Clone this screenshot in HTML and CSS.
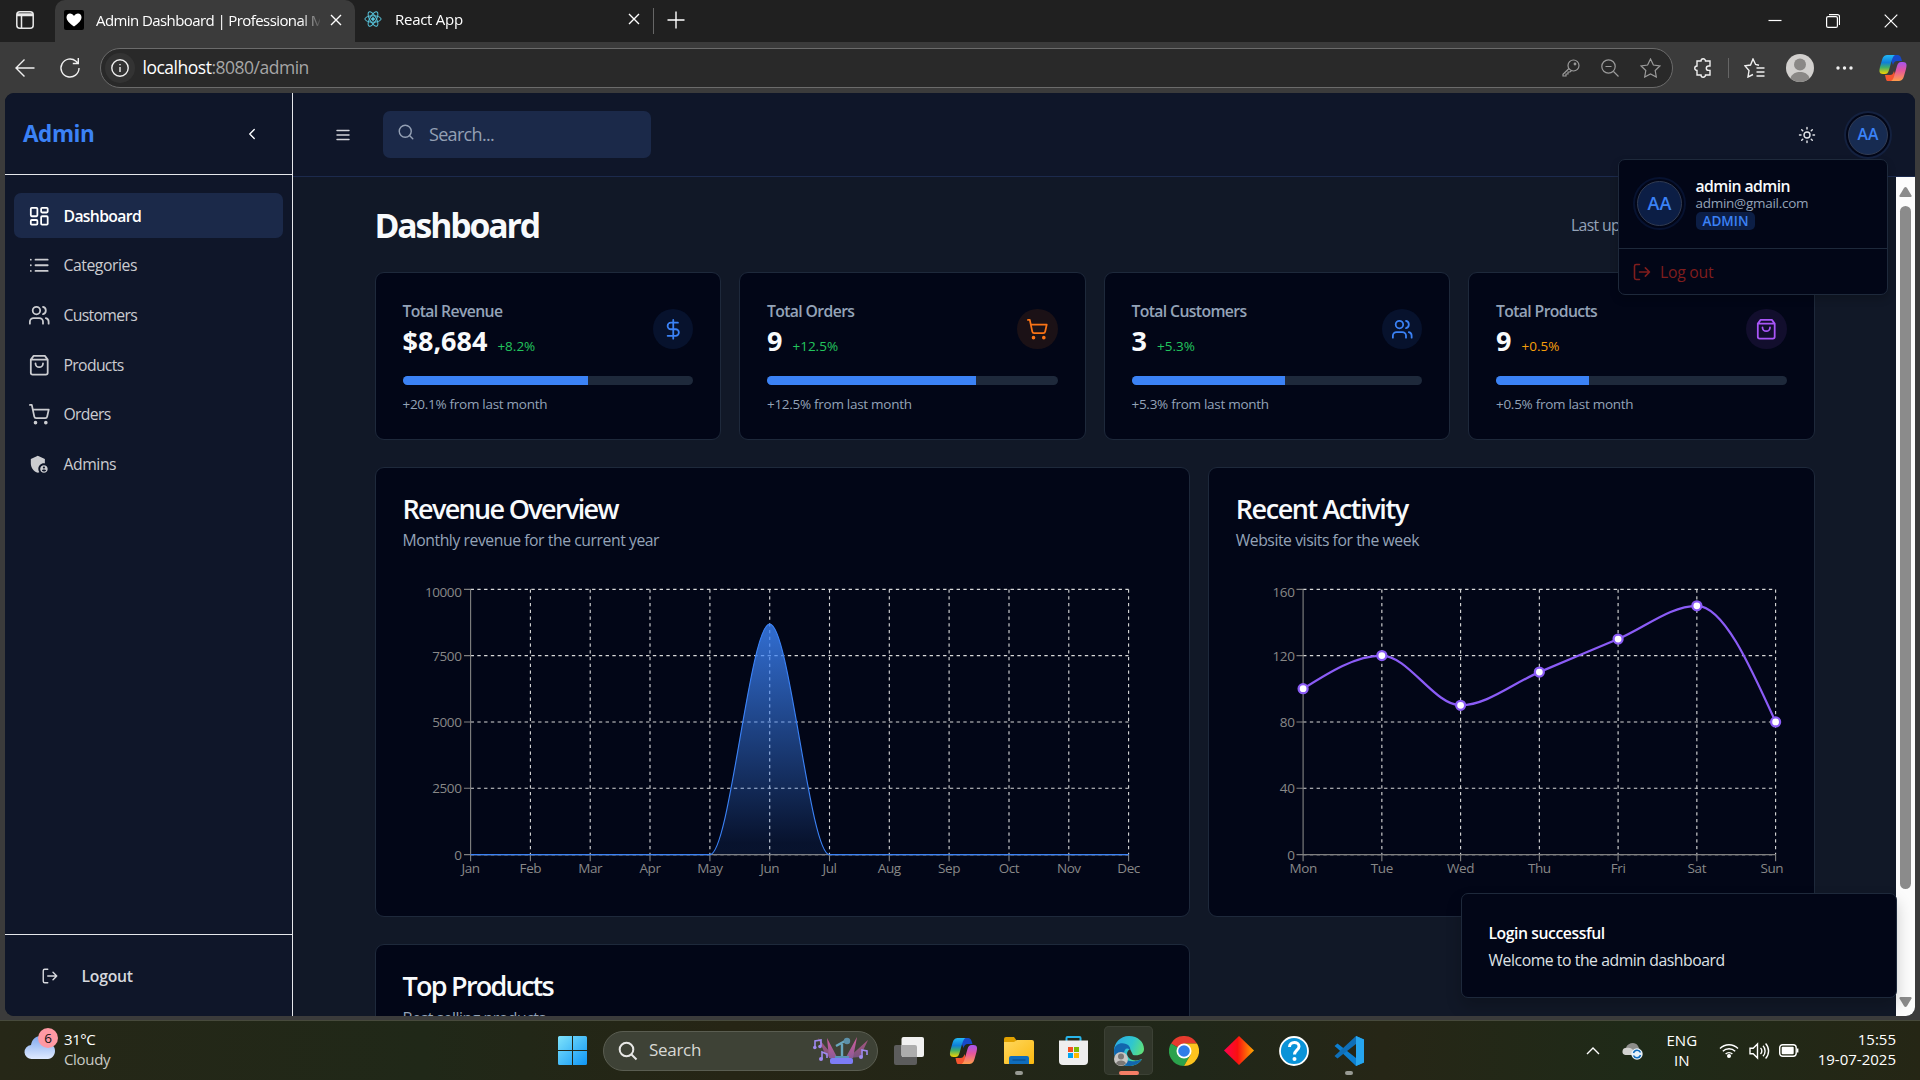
FILE: index.html
```html
<!DOCTYPE html>
<html lang="en">
<head>
<meta charset="utf-8">
<title>Admin Dashboard</title>
<link rel="stylesheet" href="styles.css">
</head>
<body>
<svg class="defs" width="0" height="0" aria-hidden="true">
  <defs>
    <linearGradient id="revenue" x1="0" y1="0" x2="0" y2="1"><stop offset=".05" stop-color="#3b82f6" stop-opacity=".8"/><stop offset=".95" stop-color="#3b82f6" stop-opacity=".1"/></linearGradient>
    <linearGradient id="cpBlue" x1="0" y1="0" x2="0" y2="1"><stop offset="0" stop-color="#22b8f5"/><stop offset=".4" stop-color="#0f7fd8"/><stop offset=".65" stop-color="#3fae6a"/><stop offset="1" stop-color="#f5d400"/></linearGradient>
    <linearGradient id="cpPink" x1="0" y1="0" x2="0" y2="1"><stop offset="0" stop-color="#a555f0"/><stop offset=".45" stop-color="#e4569c"/><stop offset="1" stop-color="#ff9d4a"/></linearGradient>
    <linearGradient id="winTile" x1="0" y1="0" x2="1" y2="1"><stop offset="0" stop-color="#7fe3fb"/><stop offset="1" stop-color="#0f96f5"/></linearGradient>
    <linearGradient id="cloud" x1="0" y1="0" x2="0" y2="1"><stop offset="0" stop-color="#7fa8ee"/><stop offset="1" stop-color="#dfeaff"/></linearGradient>
    <linearGradient id="folder" x1="0" y1="0" x2="1" y2="1"><stop offset="0" stop-color="#ffd75e"/><stop offset="1" stop-color="#fbb90f"/></linearGradient>
    <linearGradient id="edge" x1="0" y1="0" x2="1" y2=".4"><stop offset="0" stop-color="#2aa7e8"/><stop offset=".6" stop-color="#2fc6cf"/><stop offset="1" stop-color="#5fe07a"/></linearGradient>
    <linearGradient id="gem" x1="0" y1="0" x2="1" y2="0"><stop offset="0" stop-color="#ff0050"/><stop offset=".45" stop-color="#fa1010"/><stop offset="1" stop-color="#ffa800"/></linearGradient>
    <linearGradient id="beam" x1="0" y1="0" x2="0" y2="1"><stop offset="0" stop-color="#d35c9c"/><stop offset="1" stop-color="#8a5a94"/></linearGradient>
    <symbol id="i-dashboard" viewBox="0 0 24 24"><rect x="3" y="3" width="7" height="9" rx="1"/><rect x="14" y="3" width="7" height="5" rx="1"/><rect x="14" y="12" width="7" height="9" rx="1"/><rect x="3" y="16" width="7" height="5" rx="1"/></symbol>
    <symbol id="i-list" viewBox="0 0 24 24"><path d="M8 6h13M8 12h13M8 18h13M3 6h.01M3 12h.01M3 18h.01"/></symbol>
    <symbol id="i-users" viewBox="0 0 24 24"><path d="M16 21v-2a4 4 0 0 0-4-4H6a4 4 0 0 0-4 4v2"/><circle cx="9" cy="7" r="4"/><path d="M22 21v-2a4 4 0 0 0-3-3.87M16 3.13a4 4 0 0 1 0 7.75"/></symbol>
    <symbol id="i-bag" viewBox="0 0 24 24"><path d="M6 2 3 6v14a2 2 0 0 0 2 2h14a2 2 0 0 0 2-2V6l-3-4ZM3 6h18M16 10a4 4 0 0 1-8 0"/></symbol>
    <symbol id="i-cart" viewBox="0 0 24 24"><circle cx="8" cy="21" r="1"/><circle cx="19" cy="21" r="1"/><path d="M2.05 2.05h2l2.66 12.42a2 2 0 0 0 2 1.58h9.78a2 2 0 0 0 1.95-1.57l1.65-7.43H5.12"/></symbol>
    <symbol id="i-shield" viewBox="0 0 24 24"><path d="M17 11c.34 0 .67.04 1 .09V6.27L10.500 3 3 6.270v4.910c0 4.540 3.200 8.790 7.500 9.820.55-.13 1.080-.32 1.600-.55C11.410 19.470 11 18.280 11 17c0-3.310 2.690-6 6-6z"/><path fill-rule="evenodd" d="M17 13c-2.210 0-4 1.790-4 4s1.790 4 4 4 4-1.790 4-4-1.790-4-4-4zm0 1.380c.62 0 1.120.51 1.120 1.120s-.51 1.120-1.120 1.120-1.120-.51-1.120-1.120.5-1.120 1.120-1.120zm0 5.370c-.93 0-1.740-.46-2.240-1.170.05-.72 1.510-1.080 2.240-1.080s2.190.36 2.240 1.080c-.5.71-1.310 1.170-2.240 1.170z"/></symbol>
    <symbol id="i-logout" viewBox="0 0 24 24"><path d="M9 21H5a2 2 0 0 1-2-2V5a2 2 0 0 1 2-2h4M16 17l5-5-5-5M21 12H9"/></symbol>
    <symbol id="i-dollar" viewBox="0 0 24 24"><path d="M12 2v20M17 5H9.500a3.500 3.500 0 0 0 0 7h5a3.500 3.500 0 0 1 0 7H6"/></symbol>
    <symbol id="i-search" viewBox="0 0 24 24"><circle cx="11" cy="11" r="8"/><path d="m21 21-4.300-4.300"/></symbol>
    <symbol id="i-copilot" viewBox="0 0 28 26"><path d="M10 0h9c2 0 3 2 4 6h-5c-2 0-3 1-4 4z" fill="#1749c9"/><path d="M18 26H9c-2 0-2-2-3-6h5c2 0 3-1 4-4z" fill="#f4552f"/><path d="M9 0h7c-2 1-3 4-4 8l-2 7c-1 3-2 4-4 4H4c-4 0-4-3-3-7l2-7c1-4 3-5 6-5z" fill="url(#cpBlue)"/><path d="M19 26h-7c2-1 3-4 4-8l2-7c1-3 2-4 4-4h2c4 0 4 3 3 7l-2 7c-1 4-3 5-6 5z" fill="url(#cpPink)"/></symbol>
    <symbol id="i-x" viewBox="0 0 12 12"><path d="M1 1l10 10M11 1 1 11"/></symbol>
  </defs>
</svg>

<div class="tabs">
  <div class="workspace"><svg width="18" height="18" viewBox="0 0 18 18"><rect x=".8" y=".8" width="16.400" height="16.400" rx="3"/><path d="M1 3h16M1 4.500h16M5.500 5v12"/></svg></div>
  <div class="tab tab-active">
    <svg class="favicon" width="20" height="20" viewBox="0 0 20 20"><rect width="20" height="20" rx="2" fill="#000"/><path d="M10 16.500C5 12.800 2.500 10.200 2.500 7.200 2.500 5 4 3.500 6 3.500c1.600 0 3.200 1 4 2.500.8-1.500 2.400-2.500 4-2.500 2 0 3.500 1.500 3.500 3.700 0 3-2.500 5.600-7.500 9.300z" fill="#fff"/></svg>
    <span class="tab-title">Admin Dashboard | Professional M</span>
    <svg class="tab-x" width="12" height="12"><use href="#i-x"/></svg>
  </div>
  <div class="tab tab-idle">
    <svg class="react-icon" width="18" height="18" viewBox="-10 -10 20 20"><ellipse rx="9" ry="3.600"/><ellipse rx="9" ry="3.600" transform="rotate(60)"/><ellipse rx="9" ry="3.600" transform="rotate(120)"/><circle r="1.500" fill="#58c4dc"/></svg>
    <span class="tab-title react">React App</span>
    <svg class="tab-x" width="12" height="12"><use href="#i-x"/></svg>
  </div>
  <svg class="tab-plus" width="18" height="18" viewBox="0 0 18 18"><path d="M9 .5v17M.5 9h17"/></svg>
  <div class="window-buttons">
    <svg width="14" height="14" viewBox="0 0 14 14"><path d="M.5 6.500h13"/></svg>
    <svg width="14" height="14" viewBox="0 0 14 14"><rect x=".6" y="2.600" width="10.800" height="10.800" rx="1.500"/><path d="M3 .6h8.500a2 2 0 0 1 2 2V11"/></svg>
    <svg width="14" height="14" viewBox="0 0 14 14"><path d="M.7.7l12.600 12.600M13.300.7.7 13.300"/></svg>
  </div>
</div>

<div class="toolbar">
  <svg class="back" width="20" height="20" viewBox="0 0 20 20"><path d="M19.500 10H1M9.500 1.500 1 10l8.500 8.500"/></svg>
  <svg class="reload" width="22" height="22" viewBox="0 0 22 22"><path d="M20 11a9 9 0 1 1-3-6.700L19 6.300M19.300 1v5.500h-5.500"/></svg>
  <div class="address">
    <span class="site-info"><svg width="18" height="18" viewBox="0 0 18 18"><circle cx="9" cy="9" r="8.200"/><path d="M9 8v5M9 5v1.200"/></svg></span>
    <span class="url">localhost<span class="url-rest">:8080/admin</span></span>
    <div class="address-icons">
      <svg width="18" height="18" viewBox="0 0 18 18"><circle cx="11.500" cy="6.500" r="5.500"/><circle cx="13" cy="5" r=".8"/><path d="M7 9.500 1 15.300V17h3v-2h2v-2h2l1.500-1.500"/></svg>
      <svg width="18" height="18" viewBox="0 0 18 18"><circle cx="7.500" cy="7.500" r="6.700"/><path d="M12.500 12.500l5 5M4.500 7.500h6"/></svg>
      <svg width="21" height="20" viewBox="0 0 21 20"><path d="M10.500 1l2.900 6 6.500.9-4.700 4.600 1.100 6.500-5.800-3.100L4.700 19l1.100-6.500L1.100 7.900l6.500-.9z"/></svg>
    </div>
  </div>
  <div class="toolbar-icons">
    <svg class="ext" width="20" height="20" viewBox="0 0 20 20"><path d="M4 3h4a2 2 0 0 1 4.500 0H17v5h-1.500a2.200 2.200 0 0 0 0 4.400H17V17h-4.500a2 2 0 0 1-4.500 0H4v-4.500a2.200 2.200 0 0 1 0-4.500z"/></svg>
    <span class="divider"></span>
    <svg class="favs" width="21" height="20" viewBox="0 0 21 20"><path d="M9 16.500l-5 2.500 1-6.500L1 7.900l5.500-.9L9 1l2.600 5.500L15 7.300M12.500 10H20.500M12.500 14h8M12.500 18h8"/></svg>
    <svg class="profile" width="28" height="28" viewBox="0 0 28 28"><circle cx="14" cy="14" r="14" fill="#d2d0ce"/><circle cx="14" cy="10.500" r="6" fill="#8a8886"/><path d="M4.500 24.200C6 19.500 10 18 14 18s8 1.500 9.500 6.200A14 14 0 0 1 4.500 24.200z" fill="#8a8886"/></svg>
    <svg class="dots" width="17" height="4" viewBox="0 0 17 4"><circle cx="2" cy="2" r="1.700"/><circle cx="8.500" cy="2" r="1.700"/><circle cx="15" cy="2" r="1.700"/></svg>
    <svg class="copilot" width="28" height="26"><use href="#i-copilot"/></svg>
  </div>
</div>

<div class="page">
  <aside class="sidebar">
    <div class="brand"><span class="brand-name">Admin</span><svg class="ln" width="18" height="18" viewBox="0 0 24 24"><path d="M15 18l-6-6 6-6"/></svg></div>
    <nav class="nav">
      <a class="nav-item nav-active"><svg class="ln"><use href="#i-dashboard"/></svg>Dashboard</a>
      <a class="nav-item"><svg class="ln"><use href="#i-list"/></svg>Categories</a>
      <a class="nav-item tight"><svg class="ln"><use href="#i-users"/></svg>Customers</a>
      <a class="nav-item tight"><svg class="ln"><use href="#i-bag"/></svg>Products</a>
      <a class="nav-item tight"><svg class="ln"><use href="#i-cart"/></svg>Orders</a>
      <a class="nav-item"><svg class="solid"><use href="#i-shield"/></svg>Admins</a>
    </nav>
    <div class="sidebar-foot"><svg class="ln" width="18" height="18"><use href="#i-logout"/></svg>Logout</div>
  </aside>

  <div class="main">
    <header class="header">
      <svg class="ln menu" width="18" height="18" viewBox="0 0 24 24"><path d="M4 6h16M4 12h16M4 18h16"/></svg>
      <div class="search"><svg class="ln" width="18" height="18"><use href="#i-search"/></svg><span>Search...</span></div>
      <svg class="ln sun" width="18" height="18" viewBox="0 0 24 24"><circle cx="12" cy="12" r="4"/><path d="M12 2v2M12 20v2M4.930 4.930l1.410 1.410M17.660 17.660l1.410 1.410M2 12h2M20 12h2M6.340 17.660l-1.410 1.410M19.070 4.930l-1.410 1.410"/></svg>
      <div class="avatar avatar-sm">AA</div>
    </header>
    <div class="scroll">
      <div class="content">
        <div class="container">
          <div class="title-row"><h1>Dashboard</h1><span class="updated">Last up</span></div>
          <div class="stats">
            <section class="card stat">
              <div class="stat-top"><div><p class="stat-label">Total Revenue</p><p class="stat-value">$8,684<em class="up">+8.2%</em></p></div><span class="chip blue"><svg class="ln"><use href="#i-dollar"/></svg></span></div>
              <div class="bar"><div class="bar-fill" style="width:64%"></div></div>
              <p class="stat-note">+20.1% from last month</p>
            </section>
            <section class="card stat">
              <div class="stat-top"><div><p class="stat-label">Total Orders</p><p class="stat-value">9<em class="up">+12.5%</em></p></div><span class="chip orange"><svg class="ln"><use href="#i-cart"/></svg></span></div>
              <div class="bar"><div class="bar-fill" style="width:72%"></div></div>
              <p class="stat-note">+12.5% from last month</p>
            </section>
            <section class="card stat">
              <div class="stat-top"><div><p class="stat-label">Total Customers</p><p class="stat-value">3<em class="up">+5.3%</em></p></div><span class="chip blue"><svg class="ln"><use href="#i-users"/></svg></span></div>
              <div class="bar"><div class="bar-fill" style="width:53%"></div></div>
              <p class="stat-note">+5.3% from last month</p>
            </section>
            <section class="card stat">
              <div class="stat-top"><div><p class="stat-label">Total Products</p><p class="stat-value">9<em class="warn">+0.5%</em></p></div><span class="chip purple"><svg class="ln"><use href="#i-bag"/></svg></span></div>
              <div class="bar"><div class="bar-fill" style="width:32%"></div></div>
              <p class="stat-note">+0.5% from last month</p>
            </section>
          </div>
          <div class="charts">
            <section class="card chart-card wide">
              <h2>Revenue Overview</h2>
              <p class="desc">Monthly revenue for the current year</p>
              <svg class="chart" width="759" height="310" viewBox="403 578 759 310">
                <g class="grid"><path d="M470.600 589.400H1128.600M470.600 655.600H1128.600M470.600 722H1128.600M470.600 788.300H1128.600M470.600 854.600H1128.600"/><path d="M530.400 589.400V854.600M590.200 589.400V854.600M650 589.400V854.600M709.900 589.400V854.600M769.700 589.400V854.600M829.500 589.400V854.600M889.300 589.400V854.600M949.100 589.400V854.600M1009 589.400V854.600M1068.800 589.400V854.600M1128.600 589.400V854.600"/></g>
                <path class="axis" d="M470.600 589.400V854.600M470.600 854.600H1128.600M464 589.400h6.600M464 655.600h6.600M464 722h6.600M464 788.300h6.600M464 854.600h6.600M470.600 854.600v6.600M530.400 854.600v6.600M590.200 854.600v6.600M650 854.600v6.600M709.900 854.600v6.600M769.700 854.600v6.600M829.500 854.600v6.600M889.300 854.600v6.600M949.100 854.600v6.600M1009 854.600v6.600M1068.800 854.600v6.600M1128.600 854.600v6.600"/>
                <path fill="url(#revenue)" d="M709.900 854.600C729.800 854.600 749.800 624.100 769.700 624.100S809.600 854.600 829.500 854.600z"/>
                <path class="area-line" d="M470.600 854.600H709.900C729.800 854.600 749.800 624.100 769.700 624.100S809.600 854.600 829.500 854.600H1128.600"/>
                <g class="ylab"><text x="461.500" y="596.500">10000</text><text x="461.500" y="660.500">7500</text><text x="461.500" y="727">5000</text><text x="461.500" y="793.300">2500</text><text x="461.500" y="860">0</text></g>
                <g class="xlab"><text x="470.600" y="873">Jan</text><text x="530.400" y="873">Feb</text><text x="590.200" y="873">Mar</text><text x="650" y="873">Apr</text><text x="709.900" y="873">May</text><text x="769.700" y="873">Jun</text><text x="829.500" y="873">Jul</text><text x="889.300" y="873">Aug</text><text x="949.100" y="873">Sep</text><text x="1009" y="873">Oct</text><text x="1068.800" y="873">Nov</text><text x="1128.600" y="873">Dec</text></g>
              </svg>
            </section>
            <section class="card chart-card narrow">
              <h2 class="recent">Recent Activity</h2>
              <p class="desc">Website visits for the week</p>
              <svg class="chart" width="551" height="310" viewBox="1236.200 578 551 310">
                <g class="grid"><path d="M1303.300 589.400H1775.800M1303.300 655.600H1775.800M1303.300 722H1775.800M1303.300 788.300H1775.800M1303.300 854.600H1775.800"/><path d="M1382.050 589.400V854.600M1460.800 589.400V854.600M1539.550 589.400V854.600M1618.300 589.400V854.600M1697.050 589.400V854.600M1775.800 589.400V854.600"/></g>
                <path class="axis" d="M1303.300 589.400V854.600M1303.300 854.600H1775.800M1296.700 589.400h6.600M1296.700 655.600h6.600M1296.700 722h6.600M1296.700 788.300h6.600M1296.700 854.600h6.600M1303.300 854.600v6.600M1382.050 854.600v6.600M1460.800 854.600v6.600M1539.550 854.600v6.600M1618.300 854.600v6.600M1697.050 854.600v6.600M1775.800 854.600v6.600"/>
                <path class="visits" d="M1303.300 688.700C1329.550 672.100 1355.800 655.550 1382.050 655.550C1408.300 655.550 1434.550 705.300 1460.800 705.300C1487.050 705.300 1513.300 683.200 1539.550 672.100C1565.800 661 1592.050 650.100 1618.300 639C1644.550 627.900 1670.800 605.800 1697.050 605.800C1723.300 605.800 1749.550 663.900 1775.800 721.900"/>
                <g class="points"><circle cx="1303.300" cy="688.700" r="4.500"/><circle cx="1382.050" cy="655.550" r="4.500"/><circle cx="1460.800" cy="705.300" r="4.500"/><circle cx="1539.550" cy="672.100" r="4.500"/><circle cx="1618.300" cy="639" r="4.500"/><circle cx="1697.050" cy="605.800" r="4.500"/><circle cx="1775.800" cy="721.900" r="4.500"/></g>
                <g class="ylab"><text x="1294.700" y="596.500">160</text><text x="1294.700" y="660.500">120</text><text x="1294.700" y="727">80</text><text x="1294.700" y="793.300">40</text><text x="1294.700" y="859.500">0</text></g>
                <g class="xlab"><text x="1303.300" y="873">Mon</text><text x="1382.050" y="873">Tue</text><text x="1460.800" y="873">Wed</text><text x="1539.550" y="873">Thu</text><text x="1618.300" y="873">Fri</text><text x="1697.050" y="873">Sat</text><text x="1772" y="873">Sun</text></g>
              </svg>
            </section>
          </div>
          <div class="charts">
            <section class="card chart-card wide"><h2 class="top">Top Products</h2><p class="desc">Best selling products</p></section>
          </div>
        </div>
      </div>
      <div class="scrollbar">
        <svg width="13" height="11" viewBox="0 0 13 11"><path d="M6.500 0Q7.300 0 8 1l4.500 7.500Q13 10 11.500 10H1.500Q0 10 .5 8.500L5 1Q5.700 0 6.500 0z"/></svg>
        <span class="thumb"></span>
        <svg class="down" width="13" height="11" viewBox="0 0 13 11"><path d="M6.500 11Q7.300 11 8 10l4.500-7.500Q13 1 11.500 1H1.500Q0 1 .5 2.500L5 10Q5.700 11 6.500 11z"/></svg>
      </div>
    </div>
  </div>

  <div class="dropdown">
    <div class="user">
      <div class="avatar avatar-lg">AA</div>
      <div class="user-info"><span class="user-name">admin admin</span><span class="user-mail">admin@gmail.com</span><span class="role">ADMIN</span></div>
    </div>
    <div class="menu-item"><svg class="ln" width="20" height="20"><use href="#i-logout"/></svg>Log out</div>
  </div>
  <div class="toast"><span class="toast-title">Login successful</span><span class="toast-text">Welcome to the admin dashboard</span></div>
</div>

<div class="taskbar">
  <div class="weather">
    <div class="weather-icon"><svg width="31" height="24" viewBox="0 0 31 24"><path d="M8 23a7 7 0 0 1-1-14C8 3 12 0 17 0s8 4 9 8c3 1 5 3 5 7s-3 8-7 8z" fill="url(#cloud)"/></svg><span class="badge">6</span></div>
    <div class="weather-text"><span>31°C</span><span class="dim">Cloudy</span></div>
  </div>
  <div class="apps">
    <svg class="start" width="29" height="29" viewBox="0 0 29 29"><path d="M0 1.500Q0 0 1.500 0H14v14H0zM15 0h12.500Q29 0 29 1.500V14H15zM0 15h14v14H1.500Q0 29 0 27.500zM15 15h14v12.500q0 1.500-1.500 1.500H15z"/></svg>
    <div class="task-search">
      <svg width="20" height="20" viewBox="0 0 20 20"><circle cx="8.500" cy="8.500" r="6.800"/><path d="M13.500 13.500l5 5"/></svg>
      <span>Search</span>
      <svg class="critter" width="56" height="27" viewBox="0 0 56 27"><g fill="url(#beam)"><path d="M14 1l11 21-9-1zM44 0 32 22l8-1z"/><path d="M5 1l17 20-9-2zM55 3 35 21l12-1z" fill-opacity=".75"/></g><path d="M29 7v14M23 9l9-5" stroke="#6aa6bd" stroke-width="2.400" fill="none"/><circle cx="34" cy="4" r="3.200" fill="#5d91a9"/><path d="M22 19h14v3H22z" fill="#5b93b5"/><rect x="17" y="21" width="23" height="6" rx="2" fill="#7d7cf5"/><path d="M2 10V4l6-1v6M9 22v-7l5 2v4M49 20v-7l5 1v4" fill="none" stroke="#a08af0" stroke-width="1.600"/><g fill="#a08af0"><circle cx="1.800" cy="10.500" r="1.800"/><circle cx="7" cy="9.500" r="1.800"/><circle cx="8" cy="22" r="2"/><circle cx="48" cy="20" r="2"/></g></svg>
    </div>
    <div class="app"><svg width="30" height="28" viewBox="0 0 30 28"><rect x="0" y="8" width="23" height="20" rx="2" fill="#5c5c5c"/><rect x="7.500" y="0" width="22.500" height="20" rx="2" fill="#f1f1f1"/><path d="M7.500 8H21a2 2 0 0 1 2 2v10H9.500a2 2 0 0 1-2-2z" fill="#adadad"/></svg></div>
    <div class="app"><svg width="29" height="26"><use href="#i-copilot"/></svg></div>
    <div class="app running"><svg width="30" height="27" viewBox="0 0 30 27"><path d="M0 2q0-2 2-2h8l3 4v5H0z" fill="#e0a100"/><path d="M0 5h10l3-2h15q2 0 2 2v21q0 1-1 1H1q-1 0-1-1z" fill="url(#folder)"/><path d="M5 27v-6q0-2 2-2h16q2 0 2 2v6z" fill="#0f6dbd"/><path d="M8.500 23h13" stroke="#0a4c8c" stroke-width="1.200"/></svg></div>
    <div class="app"><svg width="29" height="29" viewBox="0 0 29 29"><path d="M7.500 6V2q0-1 1-1h12q1 0 1 1v4" fill="none" stroke="#29b5ea" stroke-width="2"/><path d="M0 4.500h29V25q0 4-4 4H4q-4 0-4-4z" fill="#eee"/><path d="M9 11h5v5H9z" fill="#f25022"/><path d="M15 11h5v5h-5z" fill="#7fba00"/><path d="M9 17h5v5H9z" fill="#00a4ef"/><path d="M15 17h5v5h-5z" fill="#ffb900"/></svg></div>
    <div class="app current"><svg width="30" height="30" viewBox="0 0 30 30"><path d="M15 0C6 0 0 7 0 15c0 8 6 15 15 15 6 0 11-3 13-7-7 3-14 1-15-5 0-2 1-4 3-5l3 6c6 1 11-1 11-6C30 6 24 0 15 0z" fill="url(#edge)"/><path d="M0 14c1-6 7-8 12-6 3 1 5 4 4 6-3-3-6-1-6 4 0 6 6 10 18 5-3 5-8 7-13 7C6 30 0 24 0 14z" fill="#1266ad"/><circle cx="7" cy="23" r="7" fill="#c8c6c4"/><circle cx="7" cy="20.500" r="3" fill="#7a7876"/><path d="M2 27.500c1-4 9-4 10 0a7.200 7.200 0 0 1-10 0z" fill="#7a7876"/></svg></div>
    <div class="app"><svg width="30" height="30" viewBox="0 0 30 30"><path d="M15 15 2 7.500A15 15 0 0 1 28 7.500H15z" fill="#e63b2e"/><path d="M15 15 2 7.500A15 15 0 0 0 15 30l6.500-11.200z" fill="#2ba24c"/><path d="M15 7.500h13A15 15 0 0 1 15 30l6.500-11.200z" fill="#fcc31e"/><circle cx="15" cy="15" r="7.500" fill="#fff"/><circle cx="15" cy="15" r="5.800" fill="#2f7de9"/></svg></div>
    <div class="app"><svg width="30" height="29" viewBox="0 0 30 29"><path d="M15 0l15 14.500L15 29 0 14.500z" fill="url(#gem)"/></svg></div>
    <div class="app"><svg width="30" height="30" viewBox="0 0 30 30"><circle cx="15" cy="15" r="14" fill="#0a93d8" stroke="#fff" stroke-width="1.800"/><path d="M10.500 11c0-6 9.500-6 9.500-.5 0 3.500-4.500 4-4.500 8" fill="none" stroke="#fff" stroke-width="3"/><circle cx="15.500" cy="23" r="2" fill="#fff"/></svg></div>
    <div class="app running"><svg width="30" height="30" viewBox="0 0 30 30"><path d="M22 0l8 3.500v23L22 30 3.500 12.500.5 10l3-2.500L22 22z" fill="#0d7fd0"/><path d="M22 0l8 3.500v23L22 30z" fill="#26a5ee"/><path d="M22 8 3.500 22.500.5 20 22 0z" fill="#0f6fb8"/></svg></div>
  </div>
  <div class="tray">
    <svg class="up-arrow" width="14" height="9" viewBox="0 0 14 9"><path d="M1 8l6-6 6 6"/></svg>
    <svg class="onedrive" width="21" height="18" viewBox="0 0 21 18"><path d="M4 13a4 4 0 0 1 0-7.500C6 1 13-1 16 4l3 6-5 3z" fill="#8d8d8b"/><path d="M3.500 13a3.500 3.500 0 0 1 1-7c5-1 8 2 8 7z" fill="#d2d2d0"/><circle cx="15" cy="12" r="5.700" fill="#e8f2fb"/><path d="M11.500 11a3.700 3.700 0 0 1 7-.5M18.500 13a3.700 3.700 0 0 1-7 .5" fill="none" stroke="#0f6cbd" stroke-width="1.500"/></svg>
    <div class="lang"><span>ENG</span><span>IN</span></div>
    <svg class="wifi" width="20" height="15" viewBox="0 0 20 15"><path d="M1 5.500a12.700 12.700 0 0 1 18 0M3.800 8.300a8.800 8.800 0 0 1 12.400 0M6.600 11a5 5 0 0 1 6.800 0"/><circle cx="10" cy="13" r="1.300" fill="#fff"/></svg>
    <svg class="sound" width="21" height="18" viewBox="0 0 21 18"><path d="M1 6.300h3.200L8.500 2v14l-4.300-4.300H1zM11.500 6a4 4 0 0 1 0 6M14 3.800a7.500 7.500 0 0 1 0 10.400M16.600 1.500a11 11 0 0 1 0 15"/></svg>
    <svg class="battery" width="20" height="13" viewBox="0 0 20 13"><rect x=".7" y=".7" width="16.500" height="11.600" rx="3"/><rect x="2.700" y="2.700" width="12" height="7.600" rx="1" fill="#fff" stroke="none"/><path d="M18.700 4.500v4"/></svg>
    <div class="clock"><span>15:55</span><span>19-07-2025</span></div>
  </div>
</div>
</body>
</html>
```
FILE: styles.css
```css
* { box-sizing: border-box; margin: 0; padding: 0; }
html, body { height: 100%; }
body {
  display: flex; flex-direction: column; width: 1920px; height: 1080px; overflow: hidden;
  background: #3b3b3b; color: #f8fafc;
  font-family: "Open Sans", "Noto Sans", sans-serif; font-size: 15.75px; line-height: 22.5px; letter-spacing: -0.028em;
}
svg { display: block; flex: none; fill: none; }
em { font-style: normal; }
.defs { position: absolute; }
.ln { stroke: currentColor; stroke-width: 1.9; stroke-linecap: round; stroke-linejoin: round; }

/* browser tabs */
.tabs { display: flex; align-items: center; height: 42px; background: #202020; font-size: 15px; color: #fff; flex: none; }
.workspace { display: flex; align-items: center; justify-content: center; width: 55px; height: 42px; padding: 0 5px 2px 0; }
.workspace svg { stroke: #e8e8e8; stroke-width: 1.5; }
.tab { display: flex; align-items: center; height: 42px; padding-bottom: 2px; }
.tab-active { width: 300px; background: #3b3b3b; border-radius: 10px 10px 0 0; padding-left: 9px; }
.tab-idle { width: 299px; height: 26px; border-right: 1px solid #666; padding: 0 13px 4px 9px; }
.tab-title { flex: 1; overflow: hidden; white-space: nowrap; margin: 0 10px 0 12px; letter-spacing: -0.039em; -webkit-mask-image: linear-gradient(90deg, #000 205px, transparent 226px); }
.tab-title.react { letter-spacing: -0.018em; margin-left: 13px; }
.react-icon { stroke: #58c4dc; stroke-width: 1.1; }
.tab-x { stroke: #fff; stroke-width: 1.4; }
.tab-active .tab-x { margin-right: 13px; }
.tab-plus { stroke: #fff; stroke-width: 1.4; margin: 0 0 3px 13px; }
.window-buttons { display: flex; gap: 44px; margin-left: auto; padding-right: 22px; stroke: #fff; stroke-width: 1.2; }

/* address bar */
.toolbar { display: flex; align-items: center; height: 51px; padding: 0 13px 0 15px; background: #3b3b3b; flex: none; stroke: #f0f0f0; stroke-width: 1.4; }
.reload { margin-left: 24px; }
.address { display: flex; align-items: center; width: 1573px; height: 40px; margin-left: 19px; padding: 0 11px 0 4px; background: #292929; border: 1px solid #6b6b6b; border-radius: 20px; }
.site-info { display: flex; align-items: center; justify-content: center; width: 30px; height: 30px; border-radius: 50%; background: #333; }
.url { margin-left: 7.5px; font-size: 17.5px; letter-spacing: -0.028em; color: #fff; }
.url-rest { color: #a6a6a6; }
.address-icons { display: flex; align-items: center; gap: 21px; margin-left: auto; stroke: #9b9b9b; stroke-width: 1.2; }
.toolbar-icons { display: flex; align-items: center; margin-left: auto; }
.divider { width: 1px; height: 20px; background: #666; margin: 0 15px; }
.profile { margin-left: 21px; stroke: none; }
.dots { margin-left: 22px; fill: #f0f0f0; stroke: none; }
.copilot { margin-left: 26px; stroke: none; }

/* page frame */
.page { position: relative; display: flex; height: 923px; margin: 0 5px; border-radius: 9px; overflow: hidden; background: #111827; flex: none; }
.sidebar { display: flex; flex-direction: column; width: 288px; background: #0f1629; border-right: 1px solid #e5e7eb; flex: none; }
.brand { display: flex; align-items: center; justify-content: space-between; height: 82px; padding: 1px 31px 0 18px; border-bottom: 1px solid #e5e7eb; }
.brand-name { padding-top: 1px; font-size: 22.5px; font-weight: 700; color: #3b82f6; }
.nav { display: flex; flex-direction: column; gap: 4.7px; padding: 18px 9px; flex: 1; }
.nav-item { display: flex; align-items: center; gap: 13.5px; height: 45px; padding: 0.5px 13.5px 0; border-radius: 7px; color: #cbccd0; }
.nav-item svg { width: 22.5px; height: 22.5px; }
.nav-item.tight { letter-spacing: -0.042em; }
.nav-active { background: #1b2949; color: #fff; font-weight: 600; letter-spacing: -0.042em; }
.solid { fill: currentColor; }
.sidebar-foot { display: flex; align-items: center; gap: 22.5px; height: 82px; padding: 1px 0 0 36px; border-top: 1px solid #e5e7eb; color: #d6d8dd; font-weight: 600; letter-spacing: -0.015em; }

.main { display: flex; flex-direction: column; flex: 1; }
.header { display: flex; align-items: center; height: 84px; padding: 0 27px 0 41px; background: #0f1629; border-bottom: 1px solid #1c2a4d; flex: none; }
.menu { color: #d2d4d9; }
.search { display: flex; align-items: center; width: 268px; height: 47px; margin-left: 31px; padding: 0 14px; border-radius: 7px; background: #1b2949; color: #94a0b4; font-size: 18px; letter-spacing: -0.038em; }
.search svg { margin: 0 14px 6px 0; }
.sun { margin-left: auto; color: #e4e6ea; }
.avatar { display: flex; align-items: center; justify-content: center; border-radius: 50%; color: #3b82f6; font-weight: 600; letter-spacing: 0; flex: none; }
.avatar-sm { width: 40px; height: 40px; margin-left: 32px; background: #172b51; border: 1px solid #323c52; box-shadow: 0 0 0 2px #020617, 0 0 0 4px #14213f; font-size: 15.75px; }

.scroll { display: flex; flex: 1; min-height: 0; overflow: hidden; }
.content { display: flex; justify-content: center; flex: 1; padding-top: 27px; overflow: hidden; }
.container { display: flex; flex-direction: column; gap: 27px; width: 1440px; }
.title-row { display: flex; justify-content: space-between; align-items: center; height: 40.5px; }
h1 { padding-top: 2px; font-size: 33.75px; line-height: 40.5px; font-weight: 700; letter-spacing: -0.063em; }
.updated { width: 243.5px; padding-top: 1px; color: #94a3b8; white-space: nowrap; letter-spacing: -0.041em; }
.card { background: #020617; border: 1px solid #1e293b; border-radius: 9px; }
.stats { display: grid; grid-template-columns: repeat(4, 1fr); gap: 18px; }
.stat { height: 168px; padding: 27px; }
.stat-top { display: flex; align-items: center; justify-content: space-between; height: 58.5px; }
.stat-label { padding-top: 1px; color: #94a3b8; font-weight: 600; letter-spacing: -0.04em; }
.stat-value { display: flex; align-items: baseline; font-size: 27px; line-height: 36px; font-weight: 700; letter-spacing: 0; }
.stat-value em { margin-left: 10px; font-size: 13.5px; line-height: 18px; font-weight: 500; letter-spacing: 0; }
.up { color: #22c55e; }
.warn { color: #f59e0b; }
.chip { display: flex; align-items: center; justify-content: center; width: 40.5px; height: 40.5px; border-radius: 50%; }
.chip svg { width: 22.5px; height: 22.5px; }
.blue { background: #07122d; color: #3b82f6; }
.orange { background: #1b1116; color: #f97316; }
.purple { background: #120e2d; color: #a855f7; }
.bar { height: 9px; margin-top: 18px; border-radius: 5px; background: #1e293b; overflow: hidden; }
.bar-fill { height: 9px; background: #3b82f6; }
.stat-note { margin-top: 9.5px; font-size: 13.5px; line-height: 18px; color: #94a3b8; letter-spacing: -0.021em; }

.charts { display: grid; grid-template-columns: repeat(7, 1fr); gap: 18px; }
.chart-card { height: 450.4px; padding: 27px; }
.wide { grid-column: span 4; }
.narrow { grid-column: span 3; }
h2 { padding-top: 0.5px; font-size: 27px; line-height: 27px; font-weight: 600; letter-spacing: -0.062em; }
h2.recent { letter-spacing: -0.052em; }
h2.top { letter-spacing: -0.065em; }
.desc { margin-top: 7.25px; color: #94a3b8; }
.chart { margin-top: 26px; }
.grid { stroke: #d8d8d8; stroke-width: 1.125; stroke-dasharray: 3.375 3.375; }
.axis { stroke: #808080; stroke-width: 1.125; }
.area-line { stroke: #3b82f6; stroke-width: 1.125; }
.visits { stroke: #8b5cf6; stroke-width: 2.25; }
.points { fill: #fff; stroke: #8b5cf6; stroke-width: 2.25; }
.ylab, .xlab { fill: #888; font-size: 13.5px; letter-spacing: -0.03em; }
.ylab { text-anchor: end; }
.xlab { text-anchor: middle; }

.scrollbar { display: flex; flex-direction: column; align-items: center; width: 19px; padding: 10px 0 9px; background: #fcfcfc; flex: none; }
.scrollbar svg { fill: #8b8b8b; }
.thumb { width: 11px; height: 683px; margin-top: 8px; border-radius: 6px; background: #8b8b8b; }
.down { margin-top: auto; }

/* overlays */
.dropdown { position: absolute; left: 1613px; top: 66px; width: 270px; height: 136px; background: #020617; border: 1px solid #1e293b; border-radius: 7px; box-shadow: 0 4px 8px rgba(0, 0, 0, .2); }
.user { display: flex; align-items: center; height: 89px; padding: 0 0 1px 18px; border-bottom: 1px solid #1e293b; }
.avatar-lg { width: 45px; height: 45px; background: #0c1e45; border: 1px solid #323c52; box-shadow: 0 0 0 2px #020617, 0 0 0 4px #071230; font-size: 18px; }
.user-info { display: flex; flex-direction: column; align-items: flex-start; margin-left: 13.5px; }
.user-name { font-weight: 600; line-height: 18px; letter-spacing: -0.037em; }
.user-mail { font-size: 13.5px; line-height: 16px; color: #94a3b8; letter-spacing: -0.02em; }
.role { margin-top: 1px; padding: 0 7px; height: 18px; border-radius: 5px; background: #0c1e45; color: #3b82f6; font-size: 13.5px; line-height: 18px; font-weight: 600; letter-spacing: 0; }
.menu-item { display: flex; align-items: center; gap: 8px; height: 45px; padding: 1px 0 0 13px; color: #7f1d1d; letter-spacing: -0.016em; }
.toast { position: absolute; left: 1456px; top: 800px; width: 436px; height: 105px; padding: 27.5px 26.5px 0; display: flex; flex-direction: column; gap: 4.5px; background: #020617; border: 1px solid #1e293b; border-radius: 7px; box-shadow: 0 8px 16px rgba(0, 0, 0, .2); }
.toast-title { font-weight: 600; color: #fff; }
.toast-text { color: #dfe2e6; }

/* taskbar */
.taskbar { display: grid; grid-template-columns: 558px 1fr auto; align-items: center; height: 60px; margin-top: 4px; background: linear-gradient(90deg, #262717, #202818 22%, #262515 38%, #202719 62%, #262616 72%, #1f2a18 85%, #252615); border-top: 1px solid #474a3c; flex: none; }
.weather { display: flex; align-items: center; padding-left: 24px; }
.weather-icon { position: relative; padding-top: 4px; margin-bottom: 10px; }
.badge { position: absolute; left: 14px; top: -4px; width: 20px; height: 20px; border-radius: 50%; background: #ff99a4; color: #111; font-size: 13.5px; line-height: 20px; text-align: center; }
.weather-text { display: flex; flex-direction: column; margin: 0 0 4px 9px; font-size: 15px; line-height: 20px; color: #fff; }
.dim { color: #c9cac5; letter-spacing: -0.022em; }
.apps { display: flex; align-items: center; }
.start { fill: url(#winTile); }
.task-search { display: flex; align-items: center; width: 275px; height: 40px; margin: 0 6px 0 16px; padding: 0 8px 0 14px; border: 1px solid #5a5d51; border-radius: 20px; background: #3e4236; font-size: 17px; letter-spacing: -0.017em; color: #d8d9d5; stroke: #e8e8e6; stroke-width: 2; }
.task-search span { margin-left: 11px; }
.critter { margin-left: auto; stroke: none; }
.app { position: relative; display: flex; align-items: center; justify-content: center; width: 49px; height: 49px; margin-right: 6px; border-radius: 5px; }
.running::after { content: ""; position: absolute; left: 21px; bottom: 0; width: 8px; height: 4px; border-radius: 2px; background: #989a93; }
.current { background: #31362a; box-shadow: inset 0 0 0 1px #3c4135; }
.current::after { content: ""; position: absolute; left: 15px; bottom: 0; width: 20px; height: 4px; border-radius: 2px; background: #f47e66; }
.tray { display: flex; align-items: center; padding-right: 24px; font-size: 15px; line-height: 20px; letter-spacing: .005em; color: #fff; stroke: #fff; stroke-width: 1.4; }
.tray div { display: flex; flex-direction: column; stroke: none; }
.onedrive { margin-left: 22px; stroke: none; }
.tray .lang { align-items: center; margin-left: 23px; padding-bottom: 2px; }
.wifi { margin-left: 21.5px; }
.sound { margin-left: 10px; }
.battery { margin-left: 9px; }
.tray .clock { align-items: flex-end; margin-left: 19px; padding-bottom: 3px; letter-spacing: 0; }
```
